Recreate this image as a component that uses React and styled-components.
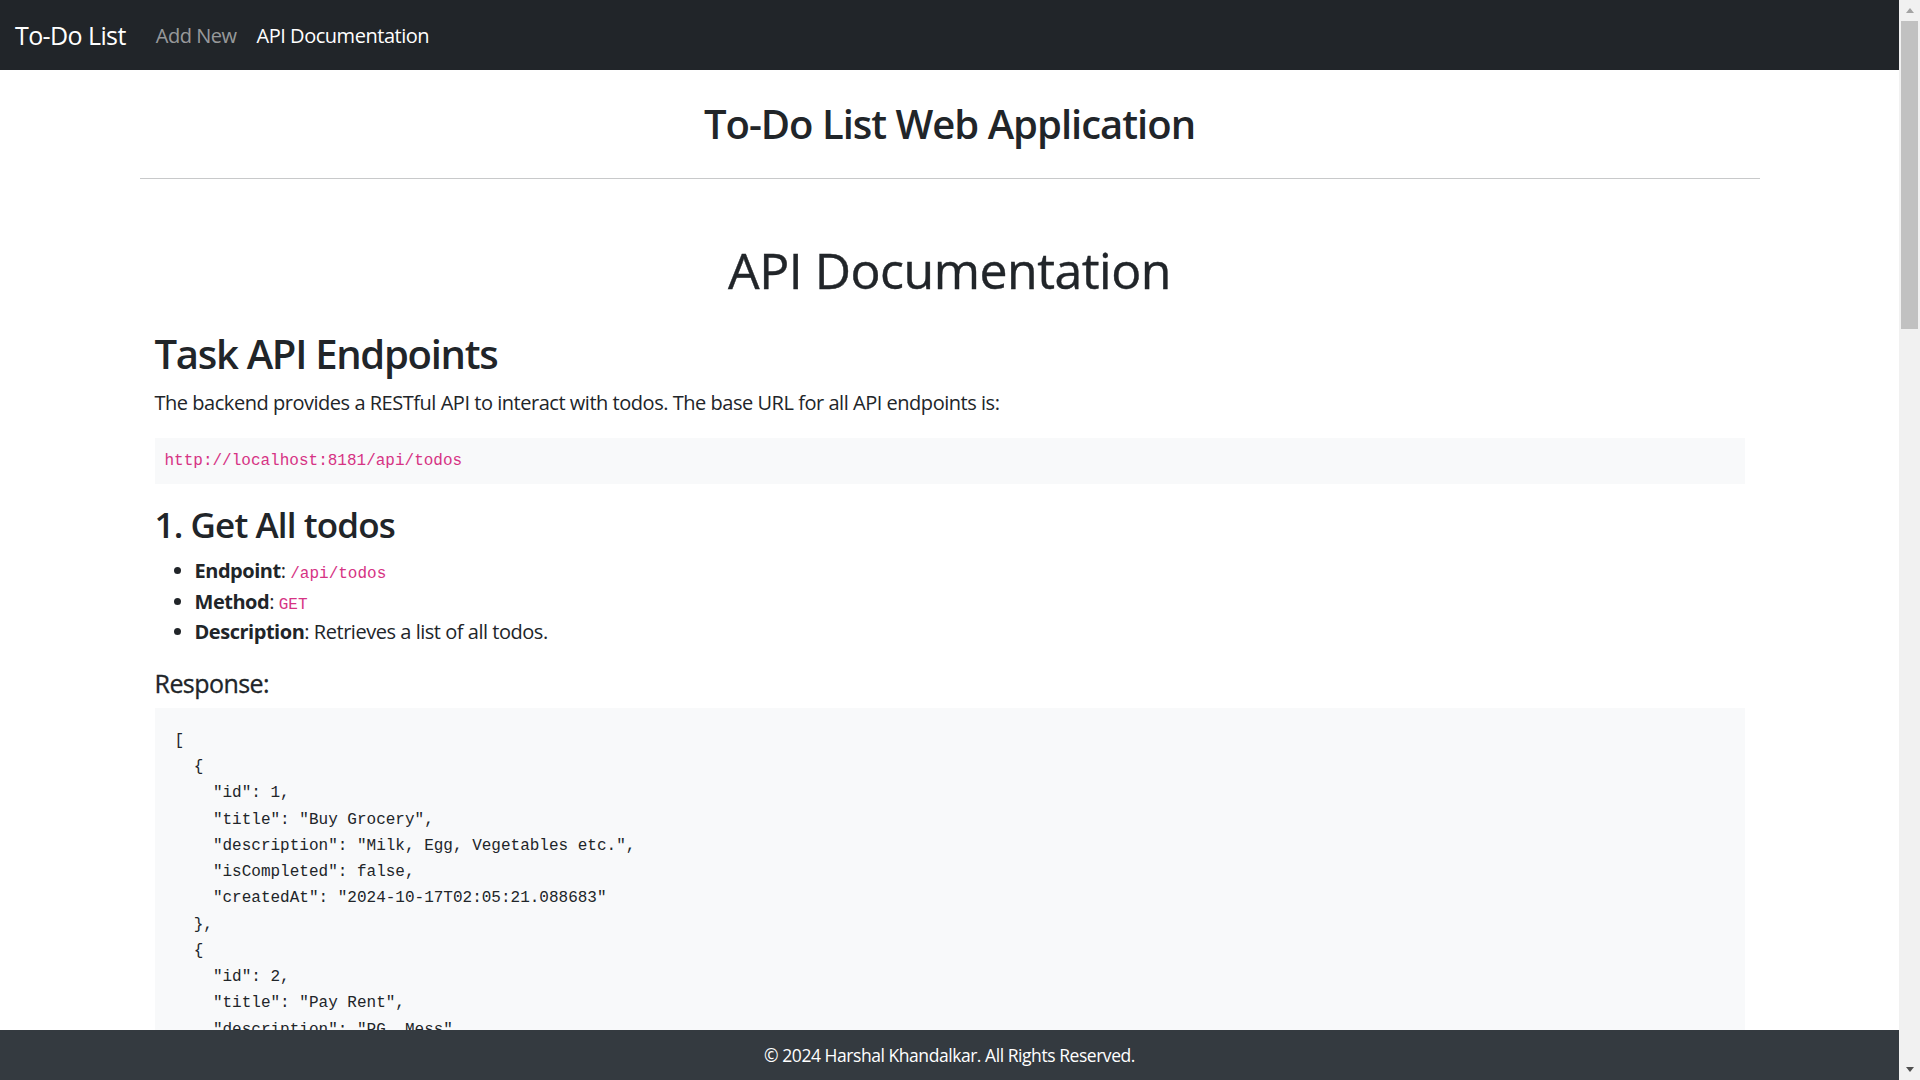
import React from "react";
import styled, { createGlobalStyle } from "styled-components";

const GlobalStyle = createGlobalStyle`
  html, body { margin: 0; padding: 0; }
  body {
    font-family: "Open Sans", "Noto Sans", "Liberation Sans", sans-serif;
    font-size: 20px;
    line-height: 1.5;
    letter-spacing: -0.47px;
    color: #212529;
    background: #fff;
  }
  *, *::before, *::after { box-sizing: border-box; }
`;

const Page = styled.div`
  margin-right: 21px;
  padding-bottom: 50px;
`;

const Navbar = styled.nav`
  display: flex;
  align-items: center;
  background: #212529;
  padding: 11px 15px 9px;
`;

const Brand = styled.a`
  font-size: 25px;
  line-height: 1.5;
  letter-spacing: -0.6px;
  padding: 6.25px 0;
  margin-right: 20px;
  color: #fff;
  text-decoration: none;
  white-space: nowrap;
`;

const NavList = styled.div`
  display: flex;
  align-items: center;
`;

const NavLink = styled.a`
  display: block;
  padding: 10px;
  font-size: 20px;
  line-height: 1.5;
  color: ${(p) => (p.$active ? "#fff" : "rgba(255, 255, 255, 0.55)")};
  text-decoration: none;
  white-space: nowrap;
`;

const Container = styled.main`
  max-width: 1650px;
  margin: 30px auto 0;
  padding: 0 15px;
`;

const PageTitle = styled.h2`
  margin: 0 0 30px;
  font-size: 40px;
  font-weight: 600;
  line-height: 1.2;
  letter-spacing: -0.025em;
  text-align: center;
`;

const Divider = styled.hr`
  margin: 20px 0;
  border: 0;
  border-top: 1px solid #c8c9ca;
`;

const Doc = styled.section`
  padding: 41px 15px 20px;
`;

const DocTitle = styled.h1`
  margin: 0 0 30px;
  font-size: 50px;
  font-weight: 400;
  line-height: 1.2;
  letter-spacing: -0.01em;
  -webkit-text-stroke: 0.4px #212529;
  text-align: center;
`;

const SectionTitle = styled.h2`
  margin: 0 0 10px;
  font-size: 40px;
  font-weight: 600;
  line-height: 1.2;
  letter-spacing: -0.032em;
`;

const EndpointTitle = styled.h3`
  margin: 0 0 10px;
  font-size: 35px;
  font-weight: 600;
  line-height: 1.2;
  letter-spacing: -0.025em;
`;

const SubTitle = styled.h5`
  margin: 0 0 10px;
  font-size: 25px;
  font-weight: 400;
  line-height: 1.2;
  letter-spacing: -0.022em;
  -webkit-text-stroke: 0.3px #212529;
`;

const Paragraph = styled.p`
  margin: 0 0 20px;
`;

const CodeBlock = styled.pre`
  margin: 0 0 20px;
  padding: ${(p) => (p.$compact ? "10px" : "20px")};
  background: #f8f9fa;
  font-family: "Liberation Mono", "DejaVu Sans Mono", monospace;
  font-size: 16px;
  line-height: 26.25px;
  letter-spacing: 0;
  color: ${(p) => (p.$accent ? "#d63384" : "#212529")};
  white-space: pre;
  overflow: hidden;
`;

const FieldList = styled.ul`
  margin: 0 0 20px;
  padding-left: 40px;
`;

const Field = styled.li`
  line-height: 30.5px;
`;

const Label = styled.strong`
  font-weight: 700;
  line-height: 1;
`;

const InlineCode = styled.code`
  font-family: "Liberation Mono", "DejaVu Sans Mono", monospace;
  font-size: 16px;
  line-height: 1;
  letter-spacing: 0;
  color: #d63384;
`;

const Footer = styled.footer`
  position: fixed;
  left: 0;
  right: 21px;
  bottom: 0;
  padding: 10px 0;
  background: #343a40;
  color: #fff;
  font-size: 17.5px;
  letter-spacing: -0.45px;
  line-height: 30px;
  text-align: center;
`;

/* Window scrollbar drawn over the page's right edge */
const Scrollbar = styled.div`
  position: fixed;
  top: 0;
  right: 0;
  width: 21px;
  height: 100vh;
  display: flex;
  flex-direction: column;
  background: #f1f1f1;
`;

const ScrollButton = styled.div`
  flex: 0 0 21px;
  display: flex;
  align-items: center;
  justify-content: center;
`;

const Arrow = styled.span`
  width: 0;
  height: 0;
  border-left: 4.5px solid transparent;
  border-right: 4.5px solid transparent;
  ${(p) =>
    p.$down
      ? `border-top: 5px solid #505050;`
      : `border-bottom: 5px solid #a3a3a3;`}
`;

const Track = styled.div`
  flex: 1;
  padding: 0 2px;
`;

const Thumb = styled.div`
  height: 308px;
  background: #c1c1c1;
`;

const todoList = `[
  {
    "id": 1,
    "title": "Buy Grocery",
    "description": "Milk, Egg, Vegetables etc.",
    "isCompleted": false,
    "createdAt": "2024-10-17T02:05:21.088683"
  },
  {
    "id": 2,
    "title": "Pay Rent",
    "description": "PG, Mess",
    "isCompleted": true,
    "createdAt": "2024-10-17T02:06:45.512347"
  }
]`;

const singleTodo = `{
  "id": 1,
  "title": "Buy Grocery",
  "description": "Milk, Egg, Vegetables etc.",
  "isCompleted": false,
  "createdAt": "2024-10-17T02:05:21.088683"
}`;

const createBody = `{
  "title": "Read Book",
  "description": "Finish reading chapter 5",
  "isCompleted": false
}`;

const createResponse = `{
  "id": 3,
  "title": "Read Book",
  "description": "Finish reading chapter 5",
  "isCompleted": false,
  "createdAt": "2024-10-17T02:10:12.334455"
}`;

const updateBody = `{
  "title": "Read Book",
  "description": "Finish reading chapter 5 and 6",
  "isCompleted": true
}`;

const updateResponse = `{
  "id": 3,
  "title": "Read Book",
  "description": "Finish reading chapter 5 and 6",
  "isCompleted": true,
  "createdAt": "2024-10-17T02:10:12.334455"
}`;

const endpoints = [
  {
    title: "1. Get All todos",
    path: "/api/todos",
    method: "GET",
    description: "Retrieves a list of all todos.",
    blocks: [{ label: "Response:", code: todoList }],
  },
  {
    title: "2. Get Todo by ID",
    path: "/api/todos/{id}",
    method: "GET",
    description: "Retrieves a single todo by its ID.",
    blocks: [{ label: "Response:", code: singleTodo }],
  },
  {
    title: "3. Create a New Todo",
    path: "/api/todos",
    method: "POST",
    description: "Creates a new todo.",
    blocks: [
      { label: "Request Body:", code: createBody },
      { label: "Response:", code: createResponse },
    ],
  },
  {
    title: "4. Update a Todo",
    path: "/api/todos/{id}",
    method: "PUT",
    description: "Updates an existing todo by its ID.",
    blocks: [
      { label: "Request Body:", code: updateBody },
      { label: "Response:", code: updateResponse },
    ],
  },
  {
    title: "5. Delete a Todo",
    path: "/api/todos/{id}",
    method: "DELETE",
    description: "Deletes a todo by its ID.",
    blocks: [{ label: "Response:", code: `HTTP 204 No Content` }],
  },
];

export default function App() {
  return (
    <Page>
      <GlobalStyle />
      <Navbar>
        <Brand href="#">To-Do List</Brand>
        <NavList>
          <NavLink href="#">Add New</NavLink>
          <NavLink href="#" $active>
            API Documentation
          </NavLink>
        </NavList>
      </Navbar>

      <Container>
        <PageTitle>To-Do List Web Application</PageTitle>
        <Divider />
        <Doc>
          <DocTitle>API Documentation</DocTitle>
          <SectionTitle>Task API Endpoints</SectionTitle>
          <Paragraph>
            The backend provides a RESTful API to interact with todos. The base URL for all API
            endpoints is:
          </Paragraph>
          <CodeBlock $compact $accent>
            http://localhost:8181/api/todos
          </CodeBlock>

          {endpoints.map((ep) => (
            <React.Fragment key={ep.title}>
              <EndpointTitle>{ep.title}</EndpointTitle>
              <FieldList>
                <Field>
                  <Label>Endpoint</Label>: <InlineCode>{ep.path}</InlineCode>
                </Field>
                <Field>
                  <Label>Method</Label>: <InlineCode>{ep.method}</InlineCode>
                </Field>
                <Field>
                  <Label>Description</Label>: {ep.description}
                </Field>
              </FieldList>
              {ep.blocks.map((b) => (
                <React.Fragment key={b.label}>
                  <SubTitle>{b.label}</SubTitle>
                  <CodeBlock>{b.code}</CodeBlock>
                </React.Fragment>
              ))}
            </React.Fragment>
          ))}
        </Doc>
      </Container>

      <Footer>© 2024 Harshal Khandalkar. All Rights Reserved.</Footer>

      <Scrollbar aria-hidden="true">
        <ScrollButton>
          <Arrow />
        </ScrollButton>
        <Track>
          <Thumb />
        </Track>
        <ScrollButton>
          <Arrow $down />
        </ScrollButton>
      </Scrollbar>
    </Page>
  );
}
